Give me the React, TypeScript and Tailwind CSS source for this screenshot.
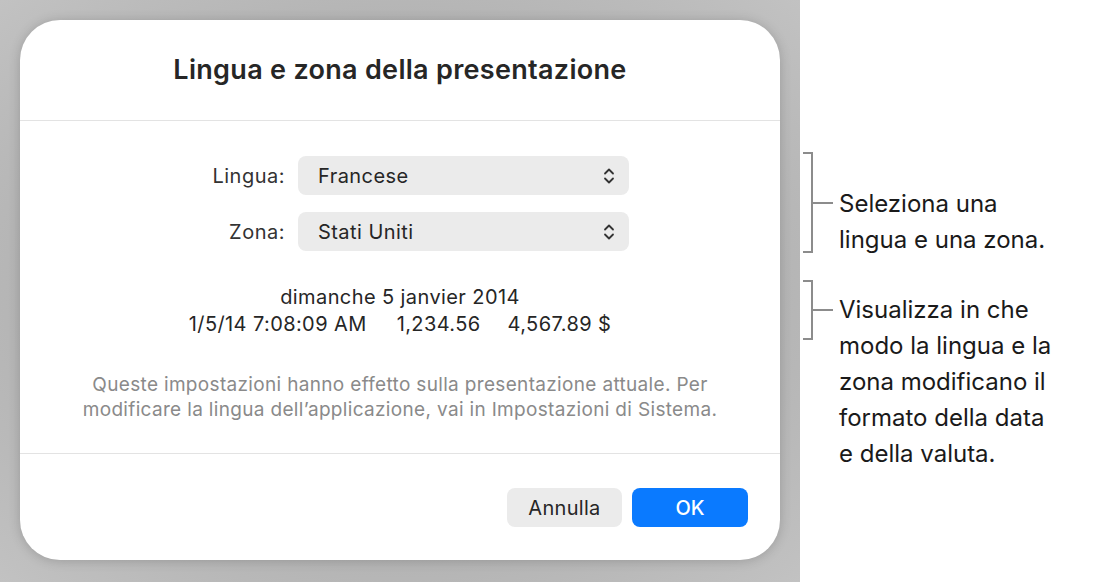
import React from "react";

function UpDown() {
  return (
    <svg width="12" height="18" viewBox="0 0 12 18" fill="none" stroke="#333" strokeWidth="1.8" strokeLinecap="round" strokeLinejoin="round">
      <path d="M2 6.5 L6 2.5 L10 6.5" />
      <path d="M2 11.5 L6 15.5 L10 11.5" />
    </svg>
  );
}

function Select({ label, value }: { label: string; value: string }) {
  return (
    <div className="flex items-center">
      <div className="w-[278px] pr-[13px] text-right text-[20px] tracking-[0.5px] text-[#333]">{label}</div>
      <div className="flex h-[39px] w-[331px] items-center justify-between rounded-[8px] bg-[#ebebeb] pl-[20px] pr-[14px] text-[20px] tracking-[0.45px] text-[#262626]">
        <span>{value}</span>
        <UpDown />
      </div>
    </div>
  );
}

function Bracket({ height }: { height: number }) {
  return (
    <div className="relative w-[30px] shrink-0" style={{ height }}>
      <div className="absolute left-0 top-0 h-full w-[10px] border-y-2 border-r-2 border-[#8c8c8c]" />
      <div className="absolute left-[10px] top-1/2 h-[2px] w-[20px] -translate-y-1/2 bg-[#8c8c8c]" />
    </div>
  );
}

export default function App() {
  return (
    <div className="flex h-[582px] w-[1097px] bg-white" style={{ fontFamily: "Inter, 'Noto Sans', sans-serif" }}>
      <div className="h-full w-[800px] bg-[radial-gradient(ellipse_at_center,#a8a8a8_0%,#b2b2b2_60%,#c2c2c2_100%)] p-[20px]">
        <div className="flex h-[540px] w-[760px] flex-col rounded-[40px] bg-white shadow-[0_1px_12px_rgba(0,0,0,0.18)]">
          <div className="flex h-[101px] items-center justify-center border-b border-[#e3e3e3]">
            <h1 className="text-[27px] font-semibold tracking-[0.3px] text-[#262626]">Lingua e zona della presentazione</h1>
          </div>
          <div className="flex flex-col items-start pt-[35px]">
            <div className="flex flex-col gap-[17px]">
              <Select label="Lingua:" value="Francese" />
              <Select label="Zona:" value="Stati Uniti" />
            </div>
          </div>
          <div className="mt-[33px] flex flex-col items-center text-[20px] leading-[27px] tracking-[0.4px] text-[#262626]">
            <div>dimanche 5 janvier 2014</div>
            <div className="flex">
              <span>1/5/14 7:08:09 AM</span>
              <span className="ml-[30px]">1,234.56</span>
              <span className="ml-[27px]">4,567.89 $</span>
            </div>
          </div>
          <div className="mt-[34px] text-center text-[19px] leading-[25px] tracking-[0.33px] text-[#8a8a8a]">
            Queste impostazioni hanno effetto sulla presentazione attuale. Per
            <br />
            modificare la lingua dell’applicazione, vai in Impostazioni di Sistema.
          </div>
          <div className="mt-[31px] border-t border-[#e3e3e3]" />
          <div className="flex justify-end gap-[10px] pr-[32px] pt-[34px]">
            <button className="h-[39px] w-[115px] rounded-[8px] bg-[#ebebeb] text-[20px] tracking-[0.3px] text-[#262626]">Annulla</button>
            <button className="h-[39px] w-[116px] rounded-[8px] bg-[#0a7aff] text-[20px] font-medium text-white">OK</button>
          </div>
        </div>
      </div>
      <div className="flex flex-col pl-[3px] text-[24px] leading-[36px] text-[#1a1a1a]">
        <div className="mt-[152px] flex items-start">
          <Bracket height={101} />
          <div className="ml-[6px] mt-[34px]">
            Seleziona una
            <br />
            lingua e una zona.
          </div>
        </div>
        <div className="mt-[22px] flex items-start">
          <Bracket height={60} />
          <div className="ml-[6px] mt-[12px]">
            Visualizza in che
            <br />
            modo la lingua e la
            <br />
            zona modificano il
            <br />
            formato della data
            <br />e della valuta.
          </div>
        </div>
      </div>
    </div>
  );
}
